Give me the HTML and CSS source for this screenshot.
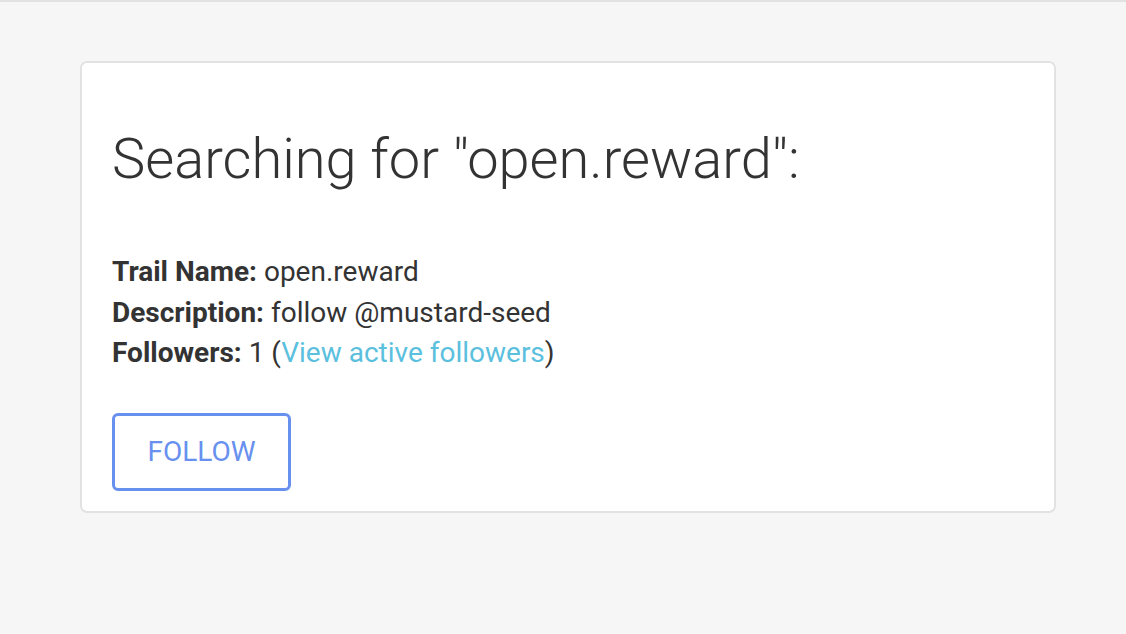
FILE: index.html
```html
<!DOCTYPE html>
<html lang="en">
<head>
  <meta charset="UTF-8">
  <meta name="viewport" content="width=device-width, initial-scale=1.0">
  <title>Trail search</title>
  <link rel="stylesheet" href="styles.css">
</head>
<body>
  <div class="topline"></div>
  <div class="page">
    <div class="card">
      <h1 class="title">Searching for "open.reward":</h1>

      <!-- 트레일 정보 -->
      <ul class="info">
        <li><b>Trail Name:</b> open.reward</li>
        <li><b>Description:</b> follow @mustard-seed</li>
        <li><b>Followers:</b> 1 (<a href="#">View active followers</a>)</li>
      </ul>

      <button class="btn-follow">FOLLOW</button>
    </div>
  </div>
</body>
</html>
```

FILE: styles.css
```css
/* reset */
* {
  margin: 0;
  padding: 0;
  box-sizing: border-box;
}
ul, li {
  list-style: none;
}
body {
  background: #f6f6f6;
  font-family: Roboto, "Noto Sans", sans-serif;
  color: #333;
}

.topline {
  height: 2px;
  background: #e2e2e2;
}

.page {
  padding: 59px 70px 0 80px;
}

/* 카드 */
.card {
  background: #fff;
  border: 2px solid #e2e2e2;
  border-radius: 7px;
  padding: 60px 30px 20px 30px;
}

.title {
  font-weight: 300;
  font-size: 56px;
  line-height: 72px;
  color: #333;
}

.info {
  margin-top: 57px;
  font-size: 28px;
  line-height: 40.5px;
}
.info b {
  font-weight: 700;
}
.info a {
  color: #5bc0de;
  text-decoration: none;
}

.btn-follow {
  display: block;
  margin-top: 39px;
  width: 179px;
  height: 78px;
  background: #fff;
  border: 3px solid #6890ef;
  border-radius: 6px;
  color: #6890ef;
  font-family: Roboto, sans-serif;
  font-size: 28px;
  cursor: pointer;
}
```
